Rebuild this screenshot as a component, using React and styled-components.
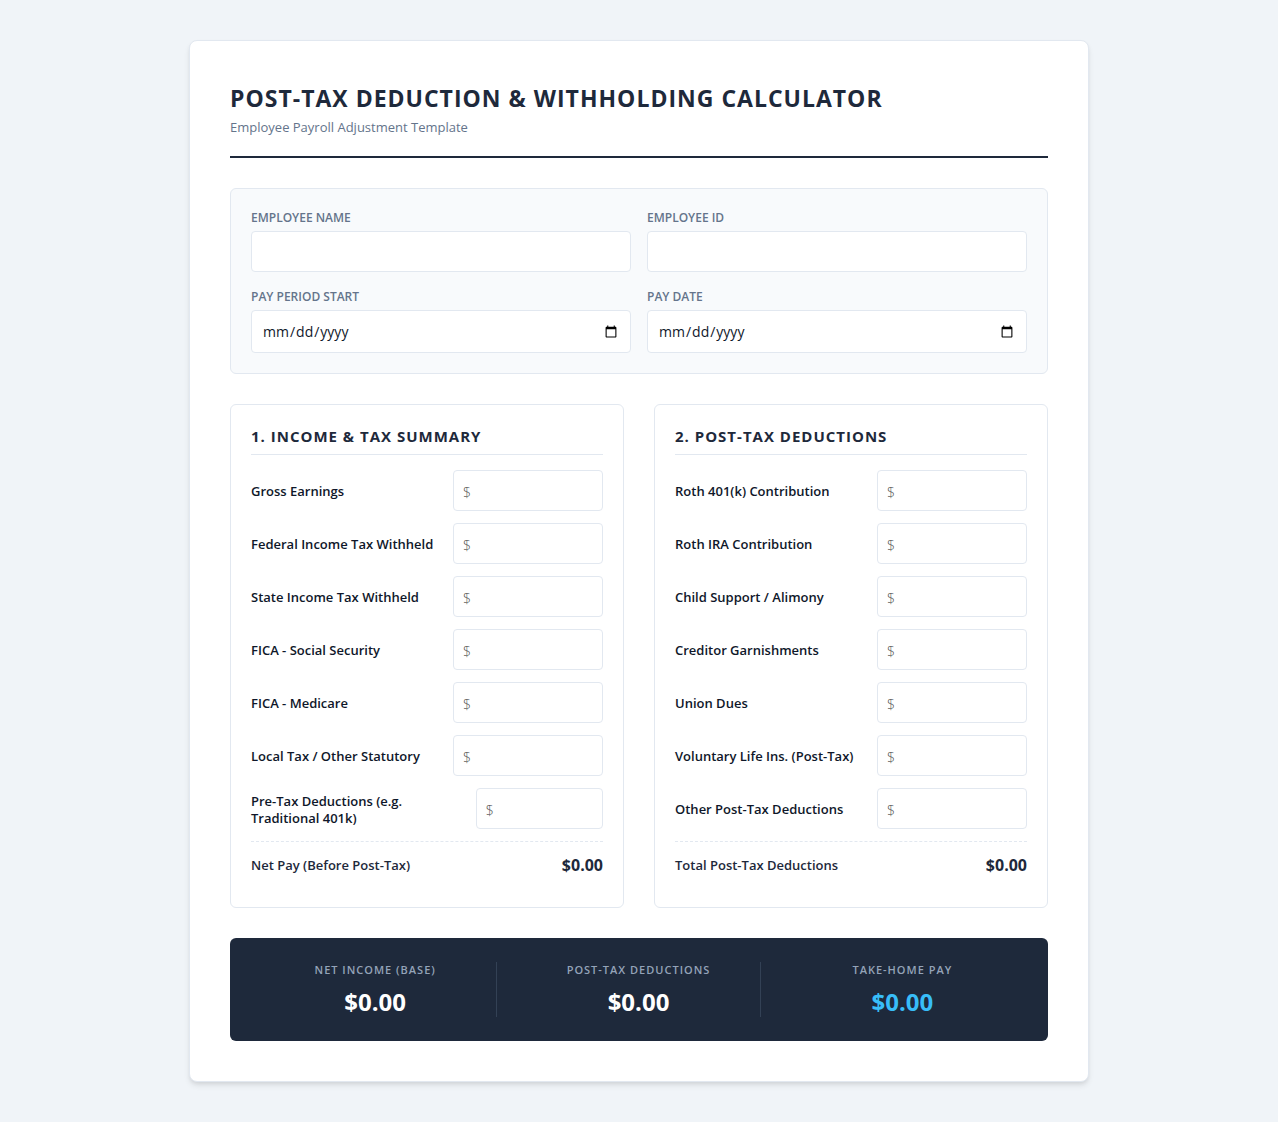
import React, { useState } from 'react'
import styled, { createGlobalStyle, ThemeProvider } from 'styled-components'

const theme = {
  color: {
    page: '#f0f4f8',
    navy: '#1e293b',
    ink: '#0f172a',
    muted: '#64748b',
    soft: '#94a3b8',
    line: '#e2e8f0',
    panel: '#f8fafc',
    accent: '#38bdf8',
  },
};

const GlobalStyle = createGlobalStyle`
  * {
    box-sizing: border-box;
  }

  body {
    margin: 0;
    padding: 40px 20px;
    background: ${theme.color.page};
    color: ${theme.color.ink};
    font-family: "Segoe UI", "Open Sans", "Noto Sans", sans-serif;
  }
`

const Sheet = styled.main`
  max-width: 900px;
  margin: 0 auto;
  padding: 40px;
  background: white;
  border: 1px solid ${props => props.theme.color.line};
  border-radius: 8px;
  box-shadow: 0 4px 6px -1px rgba(0, 0, 0, 0.1), 0 2px 4px -1px rgba(0, 0, 0, 0.06);
`

const Header = styled.header`
  margin-bottom: 30px;
  padding-bottom: 20px;
  border-bottom: 2px solid ${props => props.theme.color.navy};
`

const Title = styled.h1`
  margin: 0 0 3px;
  color: ${props => props.theme.color.navy};
  font-size: 23px;
  font-weight: 700;
  letter-spacing: 1px;
  line-height: 34px;
  text-transform: uppercase;
`

const Subtitle = styled.p`
  margin: 0;
  color: ${props => props.theme.color.muted};
  font-size: 13px;
  line-height: 18px;
`

const InfoPanel = styled.section`
  display: grid;
  grid-template-columns: 1fr 1fr;
  gap: 16px;
  margin-bottom: 30px;
  padding: 20px;
  background: ${props => props.theme.color.panel};
  border: 1px solid ${props => props.theme.color.line};
  border-radius: 6px;
`

const Field = styled.div`
  display: flex;
  flex-direction: column;
  gap: 5px;
`

const FieldLabel = styled.label`
  color: ${props => props.theme.color.muted};
  font-size: 12px;
  font-weight: 600;
  line-height: 17px;
  text-transform: uppercase;
`

const TextInput = styled.input`
  width: 100%;
  height: ${props => (props.type === 'date' ? '43px' : '41px')};
  padding: 10px;
  background: white;
  border: 1px solid ${props => props.theme.color.line};
  border-radius: 4px;
  color: ${props => props.theme.color.ink};
  font-family: inherit;
  font-size: 14px;

  &:focus {
    outline: none;
    border-color: ${props => props.theme.color.accent};
  }
`

const MoneyInput = styled(TextInput)`
  flex: 0 1 150px;
  min-width: 0;
  padding: 12px 9px 9px;

  &::placeholder {
    color: #555;
    font-weight: 300;
  }
`

const Columns = styled.div`
  display: grid;
  grid-template-columns: 1fr 1fr;
  gap: 30px;
  margin-bottom: 30px;
`

const Section = styled.section`
  padding: 20px;
  border: 1px solid ${props => props.theme.color.line};
  border-radius: 6px;
`

const SectionTitle = styled.h2`
  margin: 0 0 15px;
  padding-bottom: 6px;
  border-bottom: 1px solid ${props => props.theme.color.line};
  color: ${props => props.theme.color.navy};
  font-size: 15px;
  font-weight: 700;
  letter-spacing: 1px;
  line-height: 23px;
  text-transform: uppercase;
`

const Row = styled.div`
  display: flex;
  align-items: center;
  justify-content: space-between;
  margin-bottom: 12px;
`

const RowLabel = styled.label`
  padding: 2px 10px 0 0;
  font-size: 13px;
  font-weight: 600;
  line-height: 17px;
`

const TotalRow = styled.div`
  display: flex;
  align-items: center;
  justify-content: space-between;
  padding: 13px 0 11px;
  border-top: 1px dashed ${props => props.theme.color.line};
  color: ${props => props.theme.color.navy};
  font-size: 13px;
  font-weight: 600;
  line-height: 21px;
`

const TotalValue = styled.output`
  font-size: 16px;
  font-weight: 700;
`

const SummaryBar = styled.footer`
  display: grid;
  grid-template-columns: repeat(3, 1fr);
  gap: 20px;
  padding: 24px;
  background: ${props => props.theme.color.navy};
  border-radius: 6px;
  color: white;
  text-align: center;
`

const SummaryItem = styled.div`
  border-right: 1px solid #334155;

  &:last-child {
    border-right: none;
  }
`

const SummaryLabel = styled.div`
  margin-bottom: 10px;
  color: ${props => props.theme.color.soft};
  font-size: 11px;
  font-weight: 600;
  letter-spacing: 1px;
  line-height: 15px;
  text-transform: uppercase;
`

const SummaryValue = styled.div`
  color: ${props => (props.$highlight ? props.theme.color.accent : 'white')};
  font-size: 24px;
  font-weight: 700;
  line-height: 30px;
`

const infoFields = [
  { id: 'employeeName', label: 'Employee Name', type: 'text' },
  { id: 'employeeId', label: 'Employee ID', type: 'text' },
  { id: 'periodStart', label: 'Pay Period Start', type: 'date' },
  { id: 'payDate', label: 'Pay Date', type: 'date' },
];

const incomeFields = [
  { id: 'gross', label: 'Gross Earnings' },
  { id: 'federal', label: 'Federal Income Tax Withheld' },
  { id: 'state', label: 'State Income Tax Withheld' },
  { id: 'socialSecurity', label: 'FICA - Social Security' },
  { id: 'medicare', label: 'FICA - Medicare' },
  { id: 'local', label: 'Local Tax / Other Statutory' },
  { id: 'preTax', label: 'Pre-Tax Deductions (e.g. Traditional 401k)' },
];

const deductionFields = [
  { id: 'roth401k', label: 'Roth 401(k) Contribution' },
  { id: 'rothIra', label: 'Roth IRA Contribution' },
  { id: 'childSupport', label: 'Child Support / Alimony' },
  { id: 'garnishments', label: 'Creditor Garnishments' },
  { id: 'unionDues', label: 'Union Dues' },
  { id: 'lifeInsurance', label: 'Voluntary Life Ins. (Post-Tax)' },
  { id: 'otherPostTax', label: 'Other Post-Tax Deductions' },
];

const sum = (fields, amounts) =>
  fields.reduce((total, { id }) => total + (parseFloat(amounts[id]) || 0), 0);

const money = (value) =>
  value.toLocaleString('en-US', { style: 'currency', currency: 'USD' });

const AmountSection = ({ title, fields, amounts, onChange, totalLabel, total }) => (
  <Section>
    <SectionTitle>{title}</SectionTitle>
    {fields.map(({ id, label }) => (
      <Row key={id}>
        <RowLabel htmlFor={id}>{label}</RowLabel>
        <MoneyInput
          id={id}
          type="text"
          inputMode="decimal"
          placeholder="$"
          value={amounts[id] || ''}
          onChange={e => onChange(id, e.target.value)}
        />
      </Row>
    ))}
    <TotalRow>
      <span>{totalLabel}</span>
      <TotalValue>{money(total)}</TotalValue>
    </TotalRow>
  </Section>
);

const App = () => {
  const [amounts, setAmounts] = useState({});

  const handleChange = (id, value) => {
    setAmounts({ ...amounts, [id]: value })
  };

  // everything after gross earnings is taken out of it
  const netPay = sum(incomeFields.slice(0, 1), amounts) - sum(incomeFields.slice(1), amounts);
  const deductions = sum(deductionFields, amounts);

  return (
    <ThemeProvider theme={theme}>
      <GlobalStyle />
      <Sheet>
        <Header>
          <Title>Post-Tax Deduction &amp; Withholding Calculator</Title>
          <Subtitle>Employee Payroll Adjustment Template</Subtitle>
        </Header>

        <InfoPanel>
          {infoFields.map(({ id, label, type }) => (
            <Field key={id}>
              <FieldLabel htmlFor={id}>{label}</FieldLabel>
              <TextInput id={id} type={type} />
            </Field>
          ))}
        </InfoPanel>

        <Columns>
          <AmountSection
            title="1. Income &amp; Tax Summary"
            fields={incomeFields}
            amounts={amounts}
            onChange={handleChange}
            totalLabel="Net Pay (Before Post-Tax)"
            total={netPay}
          />
          <AmountSection
            title="2. Post-Tax Deductions"
            fields={deductionFields}
            amounts={amounts}
            onChange={handleChange}
            totalLabel="Total Post-Tax Deductions"
            total={deductions}
          />
        </Columns>

        <SummaryBar>
          <SummaryItem>
            <SummaryLabel>Net Income (Base)</SummaryLabel>
            <SummaryValue>{money(netPay)}</SummaryValue>
          </SummaryItem>
          <SummaryItem>
            <SummaryLabel>Post-Tax Deductions</SummaryLabel>
            <SummaryValue>{money(deductions)}</SummaryValue>
          </SummaryItem>
          <SummaryItem>
            <SummaryLabel>Take-Home Pay</SummaryLabel>
            <SummaryValue $highlight>{money(netPay - deductions)}</SummaryValue>
          </SummaryItem>
        </SummaryBar>
      </Sheet>
    </ThemeProvider>
  )
};

export default App
